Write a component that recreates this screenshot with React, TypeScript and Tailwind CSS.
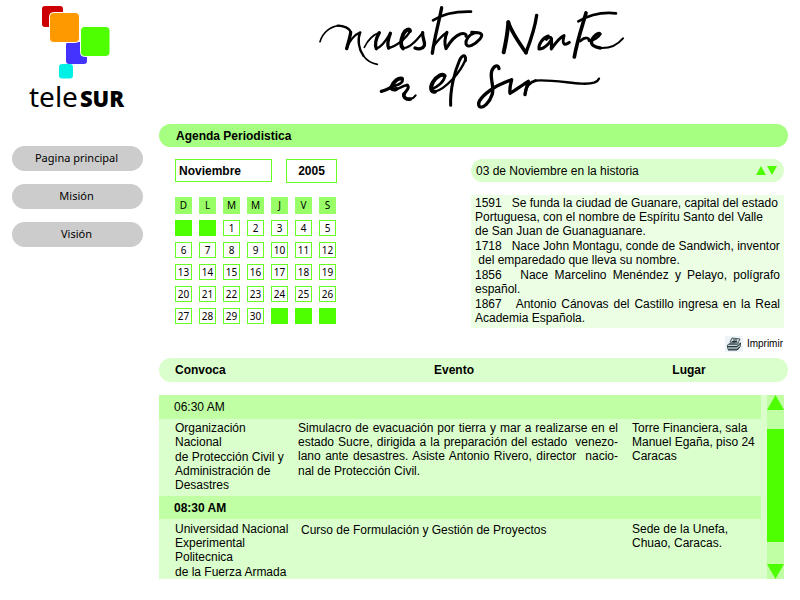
import React from "react";

const weekDays = ["D", "L", "M", "M", "J", "V", "S"];

const weeks: (number | null)[][] = [
  [null, null, 1, 2, 3, 4, 5],
  [6, 7, 8, 9, 10, 11, 12],
  [13, 14, 15, 16, 17, 18, 19],
  [20, 21, 22, 23, 24, 25, 26],
  [27, 28, 29, 30, null, null, null],
];

const links = ["Pagina principal", "Misión", "Visión"];

function Logo() {
  return (
    <a href="#inicio" className="ml-[29px] block pt-[5px]" aria-label="teleSUR">
      <svg viewBox="0 0 72 75" className="ml-3 block h-[75px] w-[72px]" aria-hidden="true">
        <rect x="1" y="1" width="21" height="21" rx="3" fill="#cc0000" />
        <rect x="25" y="37" width="21" height="22" rx="3" fill="#4433ff" />
        <rect x="8.5" y="7.500" width="30" height="30" rx="4" fill="#ff9900" stroke="#fff" />
        <rect x="39.500" y="21.500" width="29.500" height="30" rx="4" fill="#4dff00" stroke="#fff" />
        <rect x="18" y="59" width="14" height="14.500" rx="3" fill="#00f0e6" />
      </svg>
      <span className="flex items-baseline gap-[2px] font-['Noto_Sans',sans-serif] text-[28px] leading-[32px] text-black">
        tele
        <span className="font-['Open_Sans',sans-serif] text-[22px] font-extrabold">SUR</span>
      </span>
    </a>
  );
}

function Slogan() {
  return (
    <svg
      viewBox="0 0 975 345"
      className="mx-auto block h-[115px] w-[325px]"
      fill="none"
      stroke="#000"
      strokeWidth="9"
      strokeLinecap="round"
      strokeLinejoin="round"
      role="img"
      aria-label="Nuestro Norte es el Sur"
    >
      {/* nuestro */}
      <path strokeWidth="5" d="M27 125C36 96 60 78 86 77" />
      <path strokeWidth="7" d="M80 77C98 77 116 84 119 97" />
      <path strokeWidth="10" d="M119 97C117 114 110 132 107 146" />
      <path strokeWidth="7" d="M107 146C114 124 130 104 148 97" />
      <path strokeWidth="7" d="M147 99C139 118 143 148 157 167" />
      <path strokeWidth="5" d="M157 167C168 182 182 190 199 193" />
      <path strokeWidth="5" d="M160 142C168 126 180 106 205 98" />
      <path strokeWidth="10" d="M205 98C196 114 190 132 196 146" />
      <path strokeWidth="7" d="M196 146C210 142 226 120 238 100" />
      <path strokeWidth="10" d="M238 100C230 122 228 136 233 144" />
      <path strokeWidth="7" d="M233 144C256 140 288 112 297 94" />
      <path strokeWidth="12" d="M297 93C296 84 282 90 277 102C269 122 268 138 276 145" />
      <path strokeWidth="7" d="M276 145C296 144 320 118 335 98" />
      <path strokeWidth="10" d="M335 98C332 112 344 124 340 137C336 147 322 149 312 144" />
      <path strokeWidth="10" d="M392 23C384 66 370 114 364 160" />
      <path strokeWidth="8" d="M366 61C398 40 440 34 480 35" />
      <path strokeWidth="7" d="M366 140C380 122 394 106 408 97" />
      <path d="M408 97C401 114 401 134 405 146C417 126 430 108 448 102C460 98 468 104 465 109" />
      <path d="M488 100C474 104 463 120 465 132C470 146 492 134 506 118C520 100 510 98 482 97" />
      {/* Norte */}
      <path strokeWidth="12" d="M592 67C590 98 584 130 578 157" />
      <path strokeWidth="11" d="M592 67C604 102 626 130 645 158" />
      <path strokeWidth="10" d="M645 158C658 124 672 84 677 46" />
      <path d="M712 108C694 114 682 134 684 147C700 148 720 126 721 116C719 108 710 112 706 118" />
      <path d="M721 116C724 126 720 138 721 147C734 128 748 112 759 107C756 120 755 130 760 132C766 134 771 130 775 127" />
      <path strokeWidth="11" d="M825 39C812 84 798 124 790 171" />
      <path strokeWidth="8" d="M802 64C836 44 878 36 915 40" />
      <path strokeWidth="8" d="M808 123C822 110 834 112 834 122C846 122 864 112 867 102" />
      <path strokeWidth="10" d="M867 102C862 96 848 108 842 120C838 134 850 142 868 144" />
      <path strokeWidth="6" d="M866 144C894 146 920 134 936 115" />
      {/* es */}
      <path strokeWidth="10" d="M211 274C226 270 240 262 250 256" />
      <path strokeWidth="8" d="M250 258C264 254 276 246 275 238" />
      <path strokeWidth="12" d="M273 236C262 233 248 244 242 260C240 268 247 270 256 267" />
      <path strokeWidth="8" d="M254 268C268 266 278 254 290 256" />
      <path strokeWidth="9" d="M288 255C298 262 286 272 279 282" />
      <path strokeWidth="11" d="M279 282C276 294 288 299 298 297" />
      <path strokeWidth="6" d="M298 297C306 295 310 292 314 286" />
      {/* el */}
      <path strokeWidth="8" d="M364 266C380 260 400 244 401 230" />
      <path strokeWidth="12" d="M401 228C396 218 378 228 366 246C356 264 360 276 372 275" />
      <path strokeWidth="7" d="M372 275C404 266 448 218 463 180" />
      <path strokeWidth="9" d="M463 182C466 164 456 162 446 180C430 216 417 270 419 316" />
      {/* Sur */}
      <path strokeWidth="10" d="M564 206C562 192 548 196 542 214C536 236 550 256 544 282C536 308 516 326 506 320C494 306 520 282 548 264C568 252 584 246 602 239C598 254 595 268 597 280C612 272 632 256 652 244C648 258 644 270 642 284" />
      <path strokeWidth="8" d="M642 280C644 262 656 246 674 242" />
      <path strokeWidth="7" d="M672 242C712 238 768 248 812 251C838 252 860 248 864 236" />
    </svg>
  );
}

function Triangle({ down = false, className }: { down?: boolean; className: string }) {
  return (
    <svg viewBox="0 0 17 15" preserveAspectRatio="none" className={className} aria-hidden="true">
      <path d={down ? "M0 0H17L8.500 15Z" : "M0 15H17L8.500 0Z"} fill="#4dff00" />
    </svg>
  );
}

function Calendar() {
  return (
    <section aria-label="Calendario" className="w-[162px]">
      <div className="flex justify-between font-bold">
        <select
          aria-label="Mes"
          defaultValue="Noviembre"
          className="h-[23px] w-[97px] appearance-none border border-[#66ff22] bg-white px-[3px] text-[12px] leading-[14px] font-bold outline-none"
        >
          <option>Noviembre</option>
        </select>
        <input
          aria-label="Año"
          defaultValue="2005"
          className="h-6 w-[51px] border border-[#66ff22] bg-white text-center text-[12px] leading-[14px] font-bold outline-none"
        />
      </div>
      <table className="-mx-[7px] mt-2 w-[175px] table-fixed border-separate border-spacing-x-[7px] border-spacing-y-[6px] font-['Noto_Sans',sans-serif] text-[10px] leading-[14px]">
        <thead>
          <tr>
            {weekDays.map((day, i) => (
              <th key={i} scope="col" className="h-[17px] bg-[#99ff66] p-0 pb-px font-normal">
                {day}
              </th>
            ))}
          </tr>
        </thead>
        <tbody>
          {weeks.map((week, i) => (
            <tr key={i}>
              {week.map((day, j) => (
                <td
                  key={j}
                  className={
                    day === null
                      ? "h-4 border border-[#4dff00] bg-[#4dff00] p-0"
                      : "h-4 border border-[#66ff22] p-0 text-center"
                  }
                >
                  {day}
                </td>
              ))}
            </tr>
          ))}
        </tbody>
      </table>
    </section>
  );
}

function History() {
  return (
    <section className="w-[313px]">
      <header className="flex h-[23px] items-center justify-between rounded-full bg-[#dbffcc] pr-[7px] pl-[5px]">
        <h2>03 de Noviembre en la historia</h2>
        <div className="flex gap-px">
          <button type="button" aria-label="Anterior">
            <Triangle className="block h-[9px] w-[10px]" />
          </button>
          <button type="button" aria-label="Siguiente">
            <Triangle down className="block h-[9px] w-[10px]" />
          </button>
        </div>
      </header>
      <div className="mt-[13px] h-[133px] space-y-px bg-[#ecffe5] px-1 pt-px whitespace-pre-wrap">
        <p>{"1591   Se funda la ciudad de Guanare, capital del estado\nPortuguesa, con el nombre de Espíritu Santo del Valle\nde San Juan de Guanaguanare."}</p>
        <p>{"1718   Nace John Montagu, conde de Sandwich, inventor\n del emparedado que lleva su nombre."}</p>
        <p className="text-justify">{"1856   Nace Marcelino Menéndez y Pelayo, polígrafo español."}</p>
        <p className="text-justify">{"1867   Antonio Cánovas del Castillo ingresa en la Real Academia Española."}</p>
      </div>
      <div className="mt-2 flex justify-end pr-px">
        <button type="button" className="flex items-center gap-1 text-[10px] leading-[14px]">
          <svg viewBox="0 0 18 16" className="block h-4 w-[18px]" aria-hidden="true">
            <rect width="18" height="16" fill="#edf3f7" />
            <path d="M7 2L15 3L13 7L5 6Z" fill="#d4dde0" stroke="#42545a" />
            <path d="M8 4H12M7 5.500H12" stroke="#27363b" />
            <path d="M2 9L5 6.500L13 7.500L16 6.500V10L13 14H3L2 12Z" fill="#5b6d72" />
            <path d="M3 9.500H12L15 8M3 12H12L15 9.500" fill="none" stroke="#c5d3d6" />
            <path d="M2 10.500H12L16 7M3 14H12L15 11" fill="none" stroke="#27363b" />
          </svg>
          Imprimir
        </button>
      </div>
    </section>
  );
}

function Agenda() {
  return (
    <section aria-label="Agenda">
      <table className="w-full table-fixed">
        <colgroup>
          <col className="w-[139px]" />
          <col />
          <col className="w-[178px]" />
        </colgroup>
        <thead>
          <tr className="h-6">
            <th scope="col" className="rounded-l-full bg-[#dbffcc] p-0 pl-4 text-left">Convoca</th>
            <th scope="col" className="bg-[#dbffcc] p-0 text-center">Evento</th>
            <th scope="col" className="rounded-r-full bg-[#dbffcc] p-0 pr-5 text-center">Lugar</th>
          </tr>
        </thead>
      </table>
      <div className="mt-[13px] mr-1 flex bg-[#dbffcc]">
        <table className="min-w-0 flex-1 table-fixed">
          <colgroup>
            <col className="w-[139px]" />
            <col />
            <col className="w-[129px]" />
          </colgroup>
          <tbody className="align-top">
            <tr className="h-6 bg-[#c0ffa4] align-middle">
              <th scope="rowgroup" colSpan={3} className="p-0 pb-px pl-[15px] text-left font-normal">06:30 AM</th>
            </tr>
            <tr className="h-[77px]">
              <td className="space-y-px p-0 pt-[2px] pl-4 whitespace-pre">
                <p>{"Organización\nNacional"}</p>
                <p>{"de Protección Civil y\nAdministración de\nDesastres"}</p>
              </td>
              <td className="space-y-px p-0 pt-[2px] pr-[14px] whitespace-pre-wrap">
                <p className="text-justify [text-align-last:justify]">
                  {"Simulacro de evacuación por tierra y mar a realizarse en el\nestado Sucre, dirigida a la preparación del estado  venezo-\nlano ante desastres. Asiste Antonio Rivero, director  nacio-"}
                </p>
                <p>nal de Protección Civil.</p>
              </td>
              <td className="p-0 pt-[2px] whitespace-pre">{"Torre Financiera, sala\nManuel Egaña, piso 24\nCaracas"}</td>
            </tr>
          </tbody>
          <tbody className="align-top">
            <tr className="h-[23px] bg-[#c0ffa4] align-middle">
              <th scope="rowgroup" colSpan={3} className="p-0 pl-[15px] text-left">08:30 AM</th>
            </tr>
            <tr className="h-[59px]">
              <td className="space-y-px p-0 pt-[3px] pl-4 whitespace-pre">
                <p>{"Universidad Nacional\nExperimental\nPolitecnica"}</p>
                <p>de la Fuerza Armada</p>
              </td>
              <td className="p-0 pt-1 pl-[3px]">Curso de Formulación y Gestión de Proyectos</td>
              <td className="p-0 pt-[3px] whitespace-pre">{"Sede de la Unefa,\nChuao, Caracas."}</td>
            </tr>
          </tbody>
        </table>
        <div className="ml-[6px] flex w-[17px] flex-col bg-[#c0ffa4]">
          <button type="button" aria-label="Subir">
            <Triangle className="block h-[15px] w-[17px]" />
          </button>
          <div className="mt-[19px] mb-[22px] flex-1 bg-[#4dff00]" />
          <button type="button" aria-label="Bajar">
            <Triangle down className="block h-[15px] w-[17px]" />
          </button>
        </div>
      </div>
    </section>
  );
}

export default function App() {
  return (
    <div className="flex min-h-screen bg-white font-['Liberation_Sans',Arial,sans-serif] text-[12px] leading-[14px] text-black">
      <aside className="w-[159px] shrink-0">
        <Logo />
        <nav className="mt-8 ml-3 flex w-[131px] flex-col gap-[13px] font-['Noto_Sans',sans-serif] text-[11px]">
          {links.map((label) => (
            <a
              key={label}
              href="#"
              className="flex h-[25px] items-center justify-center rounded-full bg-[#cccccc] pr-[2px] pb-[2px]"
            >
              {label}
            </a>
          ))}
        </nav>
      </aside>
      <main className="min-w-0 flex-1 pr-3">
        <Slogan />
        <h1 className="mt-[9px] flex h-[23px] items-center rounded-full bg-[#a6ff80] px-[17px] font-bold">
          Agenda Periodistica
        </h1>
        <div className="mt-3 mb-[6px] flex justify-between pr-1 pl-4">
          <Calendar />
          <History />
        </div>
        <Agenda />
      </main>
    </div>
  );
}
